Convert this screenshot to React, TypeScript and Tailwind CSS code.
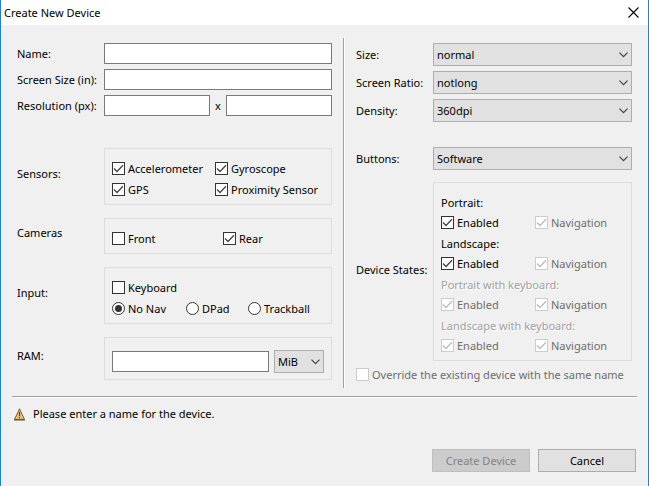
import React, { useId } from "react";
import type { ReactNode } from "react";

type BoxProps = { label: string; checked?: boolean; disabled?: boolean };

function CheckBox({ label, checked = false, disabled = false }: BoxProps) {
  return (
    <label className={`flex h-[13px] items-center gap-[3px] whitespace-nowrap ${disabled ? "text-[#6d6d6d]" : ""}`}>
      <span className="relative block size-[13px] shrink-0">
        <input
          type="checkbox"
          defaultChecked={checked}
          disabled={disabled}
          className="peer block size-[13px] appearance-none border border-[#333333] bg-white disabled:border-[#cccccc]"
        />
        <svg
          viewBox="0 0 13 13"
          className="pointer-events-none absolute inset-0 hidden size-[13px] text-[#444444] peer-checked:block peer-disabled:text-[#bcbcbc]"
          fill="none"
          stroke="currentColor"
          strokeWidth="1.3"
        >
          <path d="M2 6.5 L5 9.5 L11 3.3" />
        </svg>
      </span>
      {label}
    </label>
  );
}

function Radio({ label, checked = false }: BoxProps) {
  return (
    <label className="flex h-[13px] items-center gap-[3px] whitespace-nowrap">
      <span className="relative block size-[13px] shrink-0">
        <input
          type="radio"
          name="navigation"
          defaultChecked={checked}
          className="peer block size-[13px] appearance-none rounded-full border border-[#333333] bg-white"
        />
        <span className="pointer-events-none absolute inset-[3px] hidden rounded-full bg-[#333333] peer-checked:block" />
      </span>
      {label}
    </label>
  );
}

function TextBox({ id, label, className = "" }: { id?: string; label?: string; className?: string }) {
  return (
    <input
      id={id}
      aria-label={label}
      type="text"
      className={`h-[21px] min-w-0 flex-1 border border-[#7a7a7a] bg-white px-1 outline-none ${className}`}
    />
  );
}

function Combo({ id, label, value, className }: { id?: string; label?: string; value: string; className: string }) {
  return (
    <span className={`relative block h-[23px] ${className}`}>
      <select
        id={id}
        aria-label={label}
        defaultValue={value}
        className="block h-full w-full appearance-none border border-[#adadad] bg-[#e1e1e1] pl-[3px] outline-none"
      >
        <option>{value}</option>
      </select>
      <svg
        viewBox="0 0 9 6"
        className="pointer-events-none absolute top-[9px] right-[4px] h-[6px] w-[9px]"
        fill="none"
        stroke="#444444"
        strokeWidth="1.2"
      >
        <path d="M0.5 0.7 L4.5 4.7 L8.5 0.7" />
      </svg>
    </span>
  );
}

function FieldRow({ label, children }: { label: string; children: (id: string) => ReactNode }) {
  const id = useId();
  return (
    <div className="flex items-center">
      <label htmlFor={id} className="w-[87px] shrink-0 whitespace-nowrap">
        {label}
      </label>
      {children(id)}
    </div>
  );
}

function SelectRow({ label, value }: { label: string; value: string }) {
  const id = useId();
  return (
    <div className="flex items-center">
      <label htmlFor={id} className="w-[77px] shrink-0 whitespace-nowrap">
        {label}
      </label>
      <Combo id={id} value={value} className="flex-1" />
    </div>
  );
}

function GroupRow({ label, className, children }: { label: string; className: string; children: ReactNode }) {
  const id = useId();
  return (
    <div className="flex items-center">
      <span id={id} className="w-[87px] shrink-0 pb-[6px]">
        {label}
      </span>
      <div role="group" aria-labelledby={id} className={`min-w-0 flex-1 border border-[#dcdcdc] px-[7px] ${className}`}>
        {children}
      </div>
    </div>
  );
}

const states = [
  { title: "Portrait:", on: true },
  { title: "Landscape:", on: true },
  { title: "Portrait with keyboard:", on: false },
  { title: "Landscape with keyboard:", on: false },
];

export default function App() {
  return (
    <div className="flex min-h-screen flex-col border-x border-[#1883d7] bg-[#f0f0f0] font-['Noto_Sans','Open_Sans',sans-serif] text-[11px] leading-4 text-black">
      <header className="flex h-[25px] items-center justify-between bg-white pr-[9px] pl-[3px]">
        <h1>Create New Device</h1>
        <button type="button" aria-label="Close">
          <svg viewBox="0 0 11 11" className="block size-[11px]" fill="none" stroke="#000000" strokeWidth="1.1">
            <path d="M0.5 0.5 L10.5 10.5 M10.5 0.5 L0.5 10.5" />
          </svg>
        </button>
      </header>

      <main className="flex pt-[13px] pr-4 pl-4">
        <section className="flex min-w-0 flex-1 flex-col pt-[5px]">
          <div className="flex flex-col gap-[5px]">
            <FieldRow label="Name:">{(id) => <TextBox id={id} />}</FieldRow>
            <FieldRow label="Screen Size (in):">{(id) => <TextBox id={id} />}</FieldRow>
            <FieldRow label="Resolution (px):">
              {(id) => (
                <>
                  <TextBox id={id} />
                  <span className="w-4 text-center">x</span>
                  <TextBox label="Resolution height (px)" />
                </>
              )}
            </FieldRow>
          </div>

          <div className="mt-8 flex flex-col gap-[13px]">
            <GroupRow label="Sensors:" className="grid grid-cols-[103px_1fr] gap-y-2 pt-[13px] pb-2">
              <CheckBox label="Accelerometer" checked />
              <CheckBox label="Gyroscope" checked />
              <CheckBox label="GPS" checked />
              <CheckBox label="Proximity Sensor" checked />
            </GroupRow>
            <GroupRow label="Cameras" className="grid grid-cols-[111px_1fr] pt-[13px] pb-2">
              <CheckBox label="Front" />
              <CheckBox label="Rear" checked />
            </GroupRow>
            <GroupRow label="Input:" className="flex flex-col gap-2 pt-[13px] pb-2">
              <CheckBox label="Keyboard" />
              <div className="grid grid-cols-[74px_62px_1fr]">
                <Radio label="No Nav" checked />
                <Radio label="DPad" />
                <Radio label="Trackball" />
              </div>
            </GroupRow>
            <GroupRow label="RAM:" className="flex items-center gap-[5px] pt-3 pb-[6px]">
              <TextBox label="RAM amount" />
              <Combo label="RAM unit" value="MiB" className="w-[50px]" />
            </GroupRow>
          </div>
        </section>

        <div className="mr-[11px] ml-[11px] w-[2px] border-r border-l border-r-white border-l-[#a0a0a0]" />

        <section className="flex w-[276px] shrink-0 flex-col pt-[5px] pb-[7px]">
          <div className="flex flex-col gap-[5px]">
            <SelectRow label="Size:" value="normal" />
            <SelectRow label="Screen Ratio:" value="notlong" />
            <SelectRow label="Density:" value="360dpi" />
          </div>
          <div className="mt-[25px]">
            <SelectRow label="Buttons:" value="Software" />
          </div>
          <div className="mt-3 flex items-center">
            <span id="device-states" className="w-[77px] shrink-0 pb-1 whitespace-nowrap">
              Device States:
            </span>
            <div
              role="group"
              aria-labelledby="device-states"
              className="flex flex-1 flex-col gap-[7px] border border-[#dcdcdc] px-[7px] pt-3 pb-2"
            >
              {states.map((s) => (
                <div key={s.title} className="flex flex-col gap-[5px]">
                  <span className={s.on ? "" : "text-[#a0a0a0] [text-shadow:1px_1px_0_#ffffff]"}>{s.title}</span>
                  <div className="grid grid-cols-[94px_1fr]">
                    <CheckBox label="Enabled" checked disabled={!s.on} />
                    <CheckBox label="Navigation" checked disabled />
                  </div>
                </div>
              ))}
            </div>
          </div>
          <div className="mt-[7px]">
            <CheckBox label="Override the existing device with the same name" disabled />
          </div>
        </section>
      </main>

      <hr className="mx-[11px] mt-2 h-[2px] border-t border-b border-t-[#a0a0a0] border-b-white" />

      <p className="mt-2 flex items-center gap-2 pl-[13px]">
        <svg viewBox="0 0 11 13" className="h-[13px] w-[11px]">
          <path d="M5.5 0.8 L10.5 11.5 H0.5 Z" fill="#f0b972" stroke="#6b5a48" strokeWidth="1" />
          <path d="M0 12 H11" stroke="#55504a" strokeWidth="1" />
          <path d="M5.5 4 V8.2 M5.5 9.2 V10.4" stroke="#4a3b2a" strokeWidth="1" />
        </svg>
        Please enter a name for the device.
      </p>

      <footer className="mt-[27px] mb-[14px] flex justify-end gap-2 pr-3">
        <button
          type="button"
          disabled
          className="h-[23px] w-[98px] border border-[#bfbfbf] bg-[#cccccc] text-[#838383]"
        >
          Create Device
        </button>
        <button type="button" className="h-[23px] w-[98px] border border-[#adadad] bg-[#e1e1e1]">
          Cancel
        </button>
      </footer>
    </div>
  );
}
